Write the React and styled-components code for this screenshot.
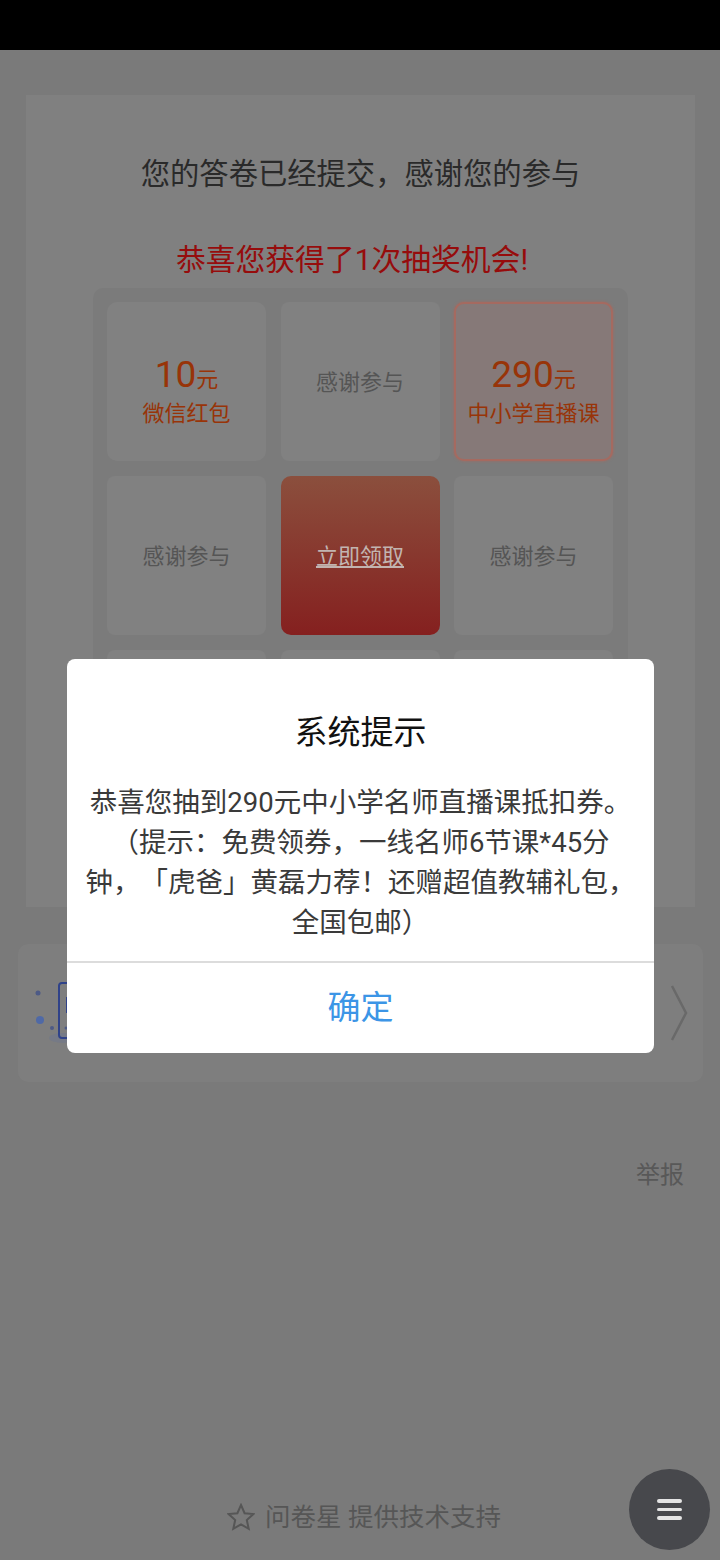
import React from "react";
import styled, { createGlobalStyle } from "styled-components";

const GlobalStyle = createGlobalStyle`
  html, body {
    margin: 0;
    padding: 0;
    background: #7a7a7a;
  }
  * {
    box-sizing: border-box;
  }
`;

const FONT = `Roboto, "Noto Sans CJK SC", sans-serif`;

// the last row sits behind the dialog, its labels can't be seen
const prizes = [
  { amount: "10", label: "微信红包" },
  { thanks: true },
  { amount: "290", label: "中小学直播课", active: true },
  { thanks: true },
  { action: true },
  { thanks: true },
  { hidden: true },
  { hidden: true },
  { hidden: true },
];

const App = () => {
  return (
    <Page>
      <GlobalStyle />
      <StatusBar />
      <Content>
        <ResultCard>
          <Heading>您的答卷已经提交，感谢您的参与</Heading>
          <LotteryTitle>恭喜您获得了1次抽奖机会!</LotteryTitle>
          <PrizeGrid>
            {prizes.map((prize, i) => (
              <Prize key={i} prize={prize} />
            ))}
          </PrizeGrid>
        </ResultCard>
        <PromoCard>
          <PromoArt />
          <Chevron viewBox="0 0 18 56">
            <path d="M2 1 L16 28 L2 55" />
          </Chevron>
        </PromoCard>
        <ReportRow>举报</ReportRow>
      </Content>
      <Footer>
        <StarIcon viewBox="0 0 28 28">
          <path d="M14 2 L17.6 10.2 L26.4 11.1 L19.8 17 L21.7 25.8 L14 21.3 L6.3 25.8 L8.2 17 L1.6 11.1 L10.4 10.2 Z" />
        </StarIcon>
        问卷星 提供技术支持
      </Footer>
      <MenuButton>
        <MenuLine />
        <MenuLine />
        <MenuLine />
      </MenuButton>
      <Dialog>
        <DialogTitle>系统提示</DialogTitle>
        <DialogBody>
          恭喜您抽到290元中小学名师直播课抵扣券。
          <br />
          （提示：免费领券，一线名师6节课*45分
          <br />
          钟，「虎爸」黄磊力荐！还赠超值教辅礼包，
          <br />
          全国包邮）
        </DialogBody>
        <DialogButton>确定</DialogButton>
      </Dialog>
    </Page>
  );
};

const Prize = ({ prize }) => {
  if (prize.hidden) {
    return <Cell />;
  }
  if (prize.action) {
    return (
      <ActionCell>
        <ActionLink>立即领取</ActionLink>
      </ActionCell>
    );
  }
  if (prize.thanks) {
    return (
      <Cell>
        <ThanksText>感谢参与</ThanksText>
      </Cell>
    );
  }
  return (
    <WonCell $active={prize.active}>
      <Amount>
        {prize.amount}
        <Unit>元</Unit>
      </Amount>
      <PrizeLabel>{prize.label}</PrizeLabel>
    </WonCell>
  );
};

const PromoArt = () => (
  <ArtIcon viewBox="0 0 60 70">
    <ellipse cx="33" cy="60" rx="14" ry="5" fill="#767a86" />
    <circle cx="8" cy="15" r="2.5" fill="#4d5a86" />
    <circle cx="10" cy="42" r="4" fill="#4f69a6" />
    <circle cx="22" cy="50" r="2" fill="#4d5a86" />
    <circle cx="36" cy="50" r="1.5" fill="#4d5a86" />
    <rect x="29" y="5" width="24" height="55" rx="3" fill="none" stroke="#2f4289" strokeWidth="2" />
    <rect x="36" y="19" width="6" height="16" fill="#2f4289" />
  </ArtIcon>
);

const Page = styled.div`
  position: relative;
  width: 720px;
  height: 1560px;
  overflow: hidden;
  background: #7a7a7a;
  font-family: ${FONT};
  text-spacing-trim: space-all;
`;

const StatusBar = styled.div`
  height: 50px;
  background: #000;
`;

const Content = styled.div`
  display: flex;
  flex-direction: column;
  padding: 45px 17px 0 18px;
`;

const ResultCard = styled.section`
  display: flex;
  flex-direction: column;
  align-items: center;
  height: 812px;
  margin: 0 8px;
  background: #808080;
`;

const Heading = styled.h1`
  margin: 59px 0 0;
  font-size: 29.3px;
  line-height: 40px;
  font-weight: 400;
  color: #2a2a2a;
`;

const LotteryTitle = styled.h2`
  margin: 46px 0 0;
  padding-right: 17px;
  font-size: 29.8px;
  line-height: 40px;
  font-weight: 400;
  color: #960c0c;
`;

const PrizeGrid = styled.div`
  display: grid;
  grid-template-columns: repeat(3, 159px);
  grid-auto-rows: 159px;
  gap: 15px 14.5px;
  width: 535px;
  height: 535px;
  margin-top: 8px;
  padding: 14px;
  border-radius: 10px;
  background: #7b7b7b;
`;

const Cell = styled.div`
  display: flex;
  flex-direction: column;
  align-items: center;
  justify-content: center;
  padding-top: 2px;
  border-radius: 8px;
  background: #818181;
`;

const WonCell = styled(Cell)`
  padding-top: 21px;
  border-radius: 10px;
  background: ${({ $active }) => ($active ? "#867978" : "#818181")};
  border: ${({ $active }) => ($active ? "2px solid #a56a60" : "none")};
  box-shadow: ${({ $active }) => ($active ? "0 0 3px #a56a60" : "none")};
`;

const ActionCell = styled(Cell)`
  border-radius: 10px;
  background: linear-gradient(180deg, #8b4f3d 0%, #85201f 100%);
`;

const ActionLink = styled.span`
  font-size: 22px;
  line-height: 30px;
  color: #c2b4b0;
  text-decoration: underline;
`;

const ThanksText = styled.span`
  font-size: 22px;
  line-height: 30px;
  color: #555;
`;

const Amount = styled.div`
  font-size: 37px;
  line-height: 40px;
  color: #983408;
`;

const Unit = styled.span`
  font-size: 22px;
`;

const PrizeLabel = styled.div`
  margin-top: -1px;
  font-size: 22px;
  line-height: 30px;
  color: #983408;
`;

const PromoCard = styled.section`
  display: flex;
  align-items: center;
  justify-content: space-between;
  height: 138px;
  margin-top: 37px;
  padding: 0 15px 0 12px;
  border-radius: 10px;
  background: #7e7e7e;
`;

const ArtIcon = styled.svg`
  width: 60px;
  height: 70px;
`;

const Chevron = styled.svg`
  width: 18px;
  height: 56px;
  fill: none;
  stroke: #696969;
  stroke-width: 2.5;
`;

const ReportRow = styled.div`
  margin-top: 77px;
  padding-right: 19px;
  text-align: right;
  font-size: 24px;
  line-height: 32px;
  color: #585858;
`;

const Footer = styled.footer`
  position: absolute;
  left: 0;
  right: 0;
  top: 1497px;
  display: flex;
  align-items: center;
  justify-content: center;
  gap: 10px;
  padding-left: 8px;
  font-size: 25.5px;
  line-height: 40px;
  color: #565656;
`;

const StarIcon = styled.svg`
  width: 28px;
  height: 28px;
  fill: none;
  stroke: #565656;
  stroke-width: 2;
`;

const MenuButton = styled.div`
  position: absolute;
  left: 629px;
  top: 1469px;
  display: flex;
  flex-direction: column;
  align-items: center;
  justify-content: center;
  gap: 5px;
  width: 81px;
  height: 81px;
  border-radius: 50%;
  background: #47484c;
`;

const MenuLine = styled.span`
  width: 25px;
  height: 3.5px;
  border-radius: 2px;
  background: #e4e4e4;
`;

const Dialog = styled.div`
  position: absolute;
  left: 67px;
  top: 659px;
  display: flex;
  flex-direction: column;
  width: 587px;
  height: 394px;
  border-radius: 8px;
  background: #fff;
`;

const DialogTitle = styled.h3`
  margin: 53px 0 0;
  text-align: center;
  font-size: 33px;
  line-height: 42px;
  font-weight: 400;
  color: #111;
`;

const DialogBody = styled.p`
  margin: 29px 0 0;
  height: 160px;
  text-align: center;
  white-space: nowrap;
  font-size: 27.5px;
  line-height: 40px;
  color: #3a3a3a;
`;

const DialogButton = styled.div`
  display: flex;
  align-items: center;
  justify-content: center;
  flex: 1;
  margin-top: 18px;
  padding-bottom: 6px;
  border-top: 2px solid #dcdcdc;
  font-size: 33px;
  color: #3c95e6;
`;

export default App;
